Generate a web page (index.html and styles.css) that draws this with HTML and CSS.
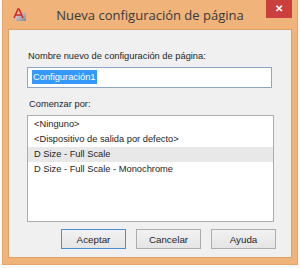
FILE: index.html
```html
<!DOCTYPE html>
<html lang="es">
<head>
    <meta charset="UTF-8">
    <title>Nueva configuración de página</title>
    <link rel="stylesheet" href="styles.css">
</head>
<body>
<div class="window">
    <div class="titlebar">
        <div class="app-icon">
            <svg width="13" height="13" viewBox="0 0 13 13">
                <defs>
                    <linearGradient id="g" x1="0" y1="0" x2="1" y2="1">
                        <stop offset="0" stop-color="#d8d8d8"/>
                        <stop offset="1" stop-color="#7d8a99"/>
                    </linearGradient>
                </defs>
                <rect x="3" y="5" width="10" height="8" fill="url(#g)"/>
                <path d="M1 10 L5 1 L6 1 L10 10 M3 7 L8 7" fill="none" stroke="#d7262b" stroke-width="1.6"/>
            </svg>
        </div>
        <div class="title">Nueva configuración de página</div>
        <div class="close">&#10005;</div>
    </div>
    <div class="content">
        <div class="label">Nombre nuevo de configuración de página:</div>
        <div class="textbox"><span class="sel">Configuración1</span></div>
        <div class="label gap">Comenzar por:</div>
        <ul class="list">
            <li>&lt;Ninguno&gt;</li>
            <li>&lt;Dispositivo de salida por defecto&gt;</li>
            <li class="current">D Size - Full Scale</li>
            <li>D Size - Full Scale - Monochrome</li>
        </ul>
        <div class="buttons">
            <button class="default">Aceptar</button>
            <button>Cancelar</button>
            <button>Ayuda</button>
        </div>
    </div>
</div>
</body>
</html>
```

FILE: styles.css
```css
* {
    padding: 0;
    margin: 0;
    list-style: none;
    box-sizing: border-box;
}
body {
    background: #fafafa;
    font-family: "Liberation Sans", Arial, sans-serif;
    font-size: 9.3px;
    color: #1e1e1e;
}
.window {
    width: 296px;
    height: 265px;
    margin-left: 2px;
    background: #f0b37a;
    border: 1px solid #e2a56c;
    border-top: 0;
    padding: 0 5px 6px 5px;
    display: flex;
    flex-direction: column;
}
.titlebar {
    height: 29px;
    display: grid;
    grid-template-columns: 1fr auto 1fr;
    align-items: start;
}
.app-icon {
    padding: 8px 0 0 5px;
}
.title {
    font-family: "Open Sans", sans-serif;
    font-size: 13px;
    color: #3a3a3a;
    padding-top: 6px;
}
.close {
    justify-self: end;
    width: 26px;
    height: 18px;
    background: #c9403e;
    color: #fff;
    font-size: 10px;
    font-weight: bold;
    text-align: center;
    line-height: 18px;
}
.content {
    flex: 1;
    background: #f0f0f0;
    border: 1px solid #dba169;
    padding: 19px 0 0 18px;
}
.label {
    height: 14px;
    line-height: 14px;
    padding-left: 1px;
}
.label.gap {
    margin-top: 9px;
    padding-left: 2px;
}
.textbox {
    margin-top: 4px;
    width: 245px;
    height: 21px;
    background: #fff;
    border: 1px solid #8ea5c6;
    padding: 2px 0 0 4px;
}
.sel {
    display: inline-block;
    background: #3399ff;
    color: #fff;
    height: 14px;
    line-height: 14px;
    padding: 0 1px;
}
.list {
    margin-top: 4px;
    width: 247px;
    height: 107px;
    background: #fff;
    border: 1px solid #abadb3;
    padding-top: 1px;
}
.list li {
    height: 15px;
    line-height: 15px;
    padding-left: 6px;
}
.list li.current {
    background: #e8e8e8;
}
.buttons {
    margin-top: 7px;
    margin-left: 34px;
    display: flex;
    gap: 10px;
}
button {
    width: 65px;
    height: 20px;
    font-family: "Liberation Sans", Arial, sans-serif;
    font-size: 9.8px;
    color: #1e1e1e;
    background: linear-gradient(#f2f2f2, #e4e4e4);
    border: 1px solid #adadad;
}
button.default {
    border-color: #4a8fd0;
}
```
